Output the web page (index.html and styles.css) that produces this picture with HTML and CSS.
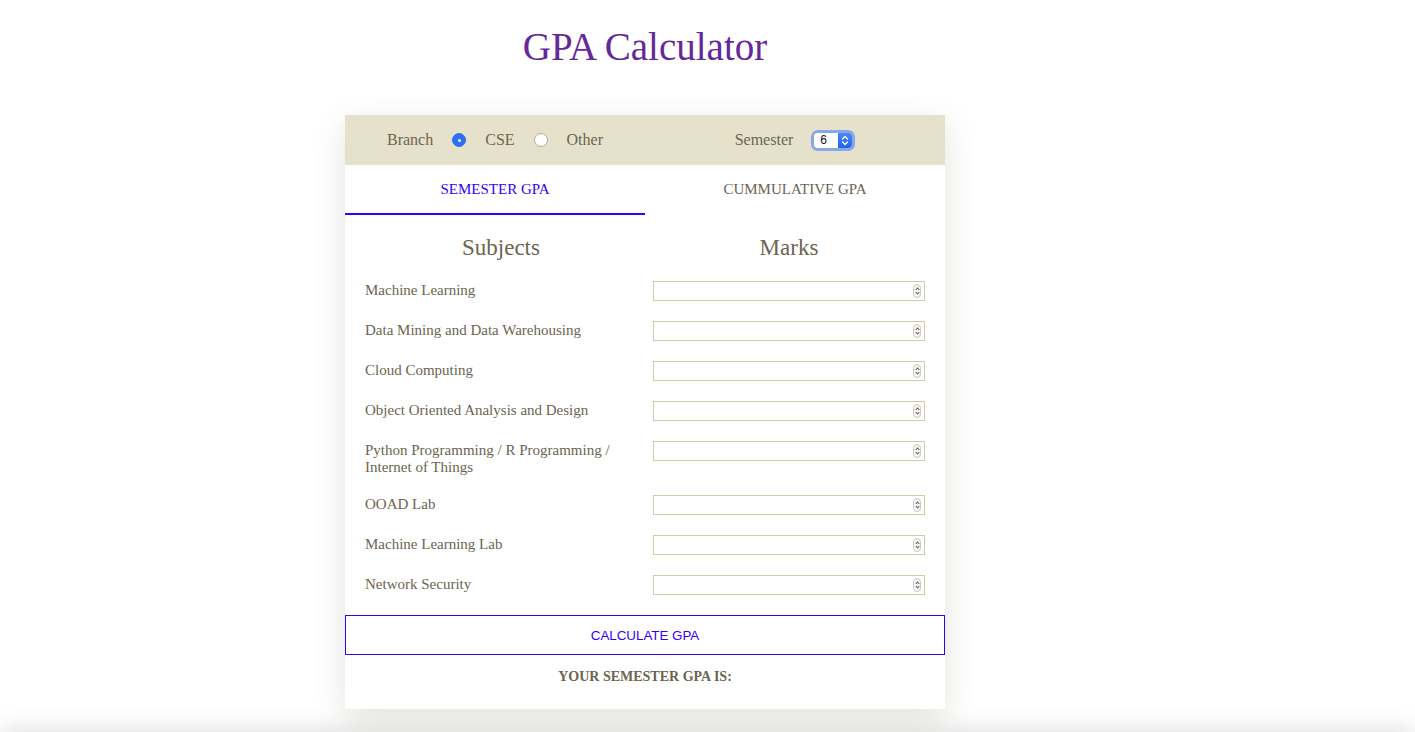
FILE: index.html
```html
<!DOCTYPE html>
<html lang="en">
<head>
<meta charset="utf-8">
<title>GPA Calculator</title>
<link rel="stylesheet" href="styles.css">
</head>
<body>
<div class="page">
  <main class="main">
    <h1 class="title">GPA Calculator</h1>
    <div class="card">
      <div class="topbar">
        <div class="half">
          <div class="group">
            <span>Branch</span>
            <input class="radio" type="radio" name="branch" id="cse" checked>
            <label for="cse">CSE</label>
            <input class="radio" type="radio" name="branch" id="other">
            <label for="other">Other</label>
          </div>
        </div>
        <div class="half">
          <div class="group sem">
            <span>Semester</span>
            <div class="select">
              <span class="select-val">6</span>
              <span class="select-arrow">
                <svg width="8" height="11" viewBox="0 0 8 11"><path d="M1.5 4 L4 1.5 L6.5 4 M1.5 7 L4 9.5 L6.5 7" fill="none" stroke="#fff" stroke-width="1.3" stroke-linecap="round" stroke-linejoin="round"/></svg>
              </span>
            </div>
          </div>
        </div>
      </div>
      <div class="tabs">
        <div class="tab active">SEMESTER GPA</div>
        <div class="tab">CUMMULATIVE GPA</div>
      </div>
      <div class="content">
        <h2 class="colhead">Subjects</h2>
        <h2 class="colhead">Marks</h2>

        <div class="subject">Machine Learning</div>
        <div class="field"><input type="number"><span class="spin"></span></div>

        <div class="subject">Data Mining and Data Warehousing</div>
        <div class="field"><input type="number"><span class="spin"></span></div>

        <div class="subject">Cloud Computing</div>
        <div class="field"><input type="number"><span class="spin"></span></div>

        <div class="subject">Object Oriented Analysis and Design</div>
        <div class="field"><input type="number"><span class="spin"></span></div>

        <div class="subject">Python Programming / R Programming / Internet of Things</div>
        <div class="field"><input type="number"><span class="spin"></span></div>

        <div class="subject">OOAD Lab</div>
        <div class="field"><input type="number"><span class="spin"></span></div>

        <div class="subject">Machine Learning Lab</div>
        <div class="field"><input type="number"><span class="spin"></span></div>

        <div class="subject">Network Security</div>
        <div class="field"><input type="number"><span class="spin"></span></div>
      </div>
      <button class="calc" type="button">CALCULATE GPA</button>
      <p class="result">YOUR SEMESTER GPA IS:</p>
    </div>
  </main>
  <footer class="footer"></footer>
</div>
</body>
</html>
```

FILE: styles.css
```css
html, body {
  margin: 0;
  padding: 0;
  overflow: hidden;
  height: 100%;
  background: #fff;
}

body {
  font-family: "Liberation Serif", "Times New Roman", serif;
  color: #6b6550;
}

.main {
  width: 1290px;
  display: flex;
  flex-direction: column;
  align-items: center;
}

.title {
  margin: 25px 0 0;
  font-size: 39px;
  line-height: 44px;
  font-weight: normal;
  color: #65289a;
}

.card {
  width: 600px;
  margin-top: 46px;
  background: #fff;
  box-shadow: 0 10px 30px rgba(90, 80, 50, 0.16);
}

.topbar {
  height: 50px;
  background: #e6e1ca;
  display: flex;
}

.half {
  flex: 1;
  display: flex;
  justify-content: center;
  align-items: center;
}

.group {
  display: flex;
  align-items: center;
  gap: 19px;
  font-size: 16px;
}

.group label {
  cursor: pointer;
}

.sem {
  gap: 18px;
}

.radio {
  appearance: none;
  -webkit-appearance: none;
  margin: 0;
  width: 14px;
  height: 14px;
  border-radius: 50%;
  background: #fff;
  border: 1px solid #b1ab93;
  box-sizing: border-box;
  position: relative;
}

.radio:checked {
  background: #2f6ff2;
  border-color: #2f6ff2;
}

.radio:checked::after {
  content: "";
  position: absolute;
  left: 4.5px;
  top: 4.5px;
  width: 3px;
  height: 3px;
  border-radius: 50%;
  background: #fff;
}

.select {
  display: flex;
  width: 38px;
  height: 15px;
  border-radius: 4px;
  box-shadow: 0 0 0 3px #86a7ea;
  overflow: hidden;
  margin: 0 3px;
  font-family: "Liberation Sans", Arial, sans-serif;
}

.select-val {
  flex: 1;
  background: #fff;
  color: #111;
  font-size: 12px;
  line-height: 15px;
  padding-left: 6px;
}

.select-arrow {
  width: 14px;
  background: linear-gradient(#4a86f7, #2563ee);
  display: flex;
  align-items: center;
  justify-content: center;
}

.tabs {
  display: flex;
  height: 50px;
}

.tab {
  flex: 1;
  display: flex;
  align-items: center;
  justify-content: center;
  font-size: 15px;
  box-sizing: border-box;
  padding-bottom: 1px;
  color: #6b6550;
}

.tab.active {
  color: #3300ff;
  border-bottom: 2px solid #3300ff;
  padding-bottom: 0;
}

.content {
  display: grid;
  grid-template-columns: 1fr 1fr;
  column-gap: 16px;
  row-gap: 20px;
  align-items: start;
  padding: 20px 20px 20px;
}

.colhead {
  margin: 0;
  font-size: 23px;
  line-height: 26px;
  font-weight: normal;
  text-align: center;
}

.subject {
  font-size: 15px;
  line-height: 17px;
  padding-top: 1px;
  margin-bottom: -1px;
  padding-right: 20px;
}

.field {
  position: relative;
  height: 20px;
}

.field input {
  box-sizing: border-box;
  width: 100%;
  height: 20px;
  margin: 0;
  border: 1px solid #d2c9a6;
  background: #fff;
  outline: none;
  appearance: textfield;
  -moz-appearance: textfield;
  font-family: "Liberation Sans", Arial, sans-serif;
  font-size: 13px;
}

.field input::-webkit-inner-spin-button,
.field input::-webkit-outer-spin-button {
  -webkit-appearance: none;
  margin: 0;
}

.spin {
  position: absolute;
  right: 4px;
  top: 3px;
  width: 6px;
  height: 12px;
  border: 1px solid #c9c9c9;
  border-radius: 4px;
  background: #f7f7f7;
}

.spin::before,
.spin::after {
  content: "";
  position: absolute;
  left: 1.5px;
  width: 2px;
  height: 2px;
  border-left: 1px solid #5e5844;
  border-top: 1px solid #5e5844;
}

.spin::before {
  top: 2.5px;
  transform: rotate(45deg);
}

.spin::after {
  top: 6px;
  transform: rotate(-135deg);
}

.calc {
  display: block;
  width: 100%;
  height: 40px;
  margin: 0;
  padding: 0;
  border: 1px solid #3300ff;
  background: #fff;
  color: #3300ff;
  font-family: "Liberation Sans", Arial, sans-serif;
  font-size: 13.33px;
  cursor: pointer;
}

.result {
  margin: 14px 0 0;
  padding-bottom: 24px;
  font-size: 14px;
  line-height: 16px;
  font-weight: bold;
  text-align: center;
}

.footer {
  margin-top: 27px;
  height: 60px;
  background: #fff;
  box-shadow: 0 0 30px rgba(0, 0, 0, 0.2);
}
```
